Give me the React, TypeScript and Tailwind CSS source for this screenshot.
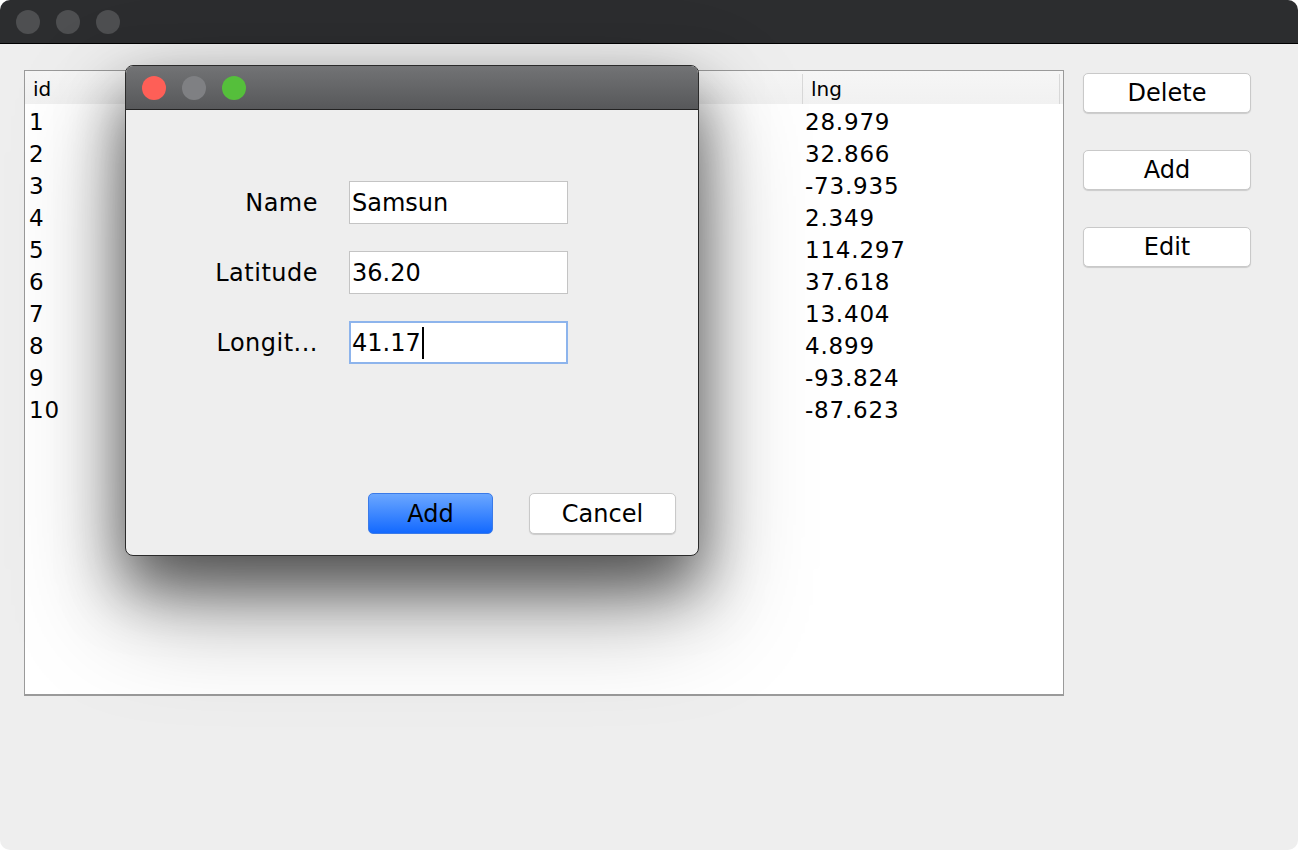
import React from "react";

const rows: [string, string][] = [
  ["1", "28.979"],
  ["2", "32.866"],
  ["3", "-73.935"],
  ["4", "2.349"],
  ["5", "114.297"],
  ["6", "37.618"],
  ["7", "13.404"],
  ["8", "4.899"],
  ["9", "-93.824"],
  ["10", "-87.623"],
];

function Light({ color }: { color: string }) {
  return <div className={`w-[24px] h-[24px] rounded-full ${color}`} />;
}

function Field({ value, focused }: { value: string; focused?: boolean }) {
  return (
    <div
      className={`w-[219px] h-[43px] bg-white flex items-center text-[24px] text-black ${
        focused ? "border-2 border-[#8db4ec] pl-[1px]" : "border border-[#c4c4c4] pl-[2px]"
      }`}
    >
      <span>{value}</span>
      {focused && <span className="inline-block w-[2px] h-[32px] bg-black ml-[1px]" />}
    </div>
  );
}

export default function App() {
  return (
    <div className="w-[1298px] h-[850px] bg-white">
      <div className="relative w-[1298px] h-[850px] bg-[#eeeeee] rounded-[10px] overflow-hidden font-['DejaVu_Sans',sans-serif] text-black">
        {/* Main title bar */}
        <div className="h-[44px] bg-[#2c2d2f] border-b border-black flex items-center pl-[16px] gap-[16px]">
          <Light color="bg-[#4e4f51]" />
          <Light color="bg-[#4e4f51]" />
          <Light color="bg-[#4e4f51]" />
        </div>

        {/* Body */}
        <div className="flex pt-[26px] pl-[24px] gap-[19px]">
          <div className="w-[1040px] h-[626px] border border-[#9a9a9a] border-b-2 bg-white flex flex-col">
            <div className="grid grid-cols-[259px_259px_259px_259px] h-[33px] bg-[linear-gradient(to_bottom,#f6f6f6,#f1f1f1)] text-[20px]">
              {["id", "", "", "lng"].map((h, i) => (
                <div
                  key={i}
                  className={`flex items-center pl-[8px] ${i > 0 ? "border-l border-[#d8d8d8]" : ""} ${
                    i === 3 ? "border-r border-[#d8d8d8] mr-[1px]" : ""
                  } my-[3px]`}
                >
                  {h}
                </div>
              ))}
            </div>
            <div className="flex flex-col text-[23px] tracking-[0.8px] pt-[2px]">
              {rows.map((r) => (
                <div key={r[0]} className="grid grid-cols-[259px_259px_259px_259px] h-[32px]">
                  <div className="flex items-center pl-[4px] leading-none">{r[0]}</div>
                  <div />
                  <div />
                  <div className="flex items-center pl-[3px] leading-none">{r[1]}</div>
                </div>
              ))}
            </div>
          </div>

          <div className="flex flex-col gap-[37px] pt-[3px]">
            {["Delete", "Add", "Edit"].map((b) => (
              <div
                key={b}
                className="w-[168px] h-[40px] bg-white border border-[#c9c9c9] rounded-[5px] shadow-[0_1px_1px_rgba(0,0,0,0.15)] flex items-center justify-center text-[24px]"
              >
                {b}
              </div>
            ))}
          </div>
        </div>

        {/* Dialog */}
        <div className="absolute left-[125px] top-[65px] w-[574px] h-[491px] rounded-[8px] border border-[#2b2b2b] bg-[#eeeeee] shadow-[0_30px_60px_rgba(0,0,0,0.55),0_50px_110px_rgba(0,0,0,0.35)] flex flex-col overflow-hidden">
          <div className="h-[44px] bg-[linear-gradient(to_bottom,#727375,#57585a)] border-b border-[#222] flex items-center pl-[16px] gap-[16px]">
            <Light color="bg-[#fe5f57]" />
            <Light color="bg-[#7f8083]" />
            <Light color="bg-[#55bf3b]" />
          </div>
          <div className="flex flex-col flex-1 pt-[71px] pb-[21px] pr-[22px]">
            <div className="flex flex-col gap-[27px]">
              {[
                ["Name", "Samsun", false],
                ["Latitude", "36.20", false],
                ["Longit...", "41.17", true],
              ].map(([l, v, f]) => (
                <div key={l as string} className="flex items-center gap-[31px]">
                  <div className="w-[192px] text-right text-[24px] tracking-[0.5px]">{l as string}</div>
                  <Field value={v as string} focused={f as boolean} />
                </div>
              ))}
            </div>
            <div className="mt-auto flex justify-end gap-[36px]">
              <div className="w-[125px] h-[41px] rounded-[5px] bg-[linear-gradient(to_bottom,#6ba7ff,#1369ff)] border border-[#3a7ae8] flex items-center justify-center text-[24px]">
                Add
              </div>
              <div className="w-[147px] h-[41px] rounded-[5px] bg-white border border-[#c9c9c9] shadow-[0_1px_1px_rgba(0,0,0,0.15)] flex items-center justify-center text-[24px]">
                Cancel
              </div>
            </div>
          </div>
        </div>
      </div>
    </div>
  );
}
